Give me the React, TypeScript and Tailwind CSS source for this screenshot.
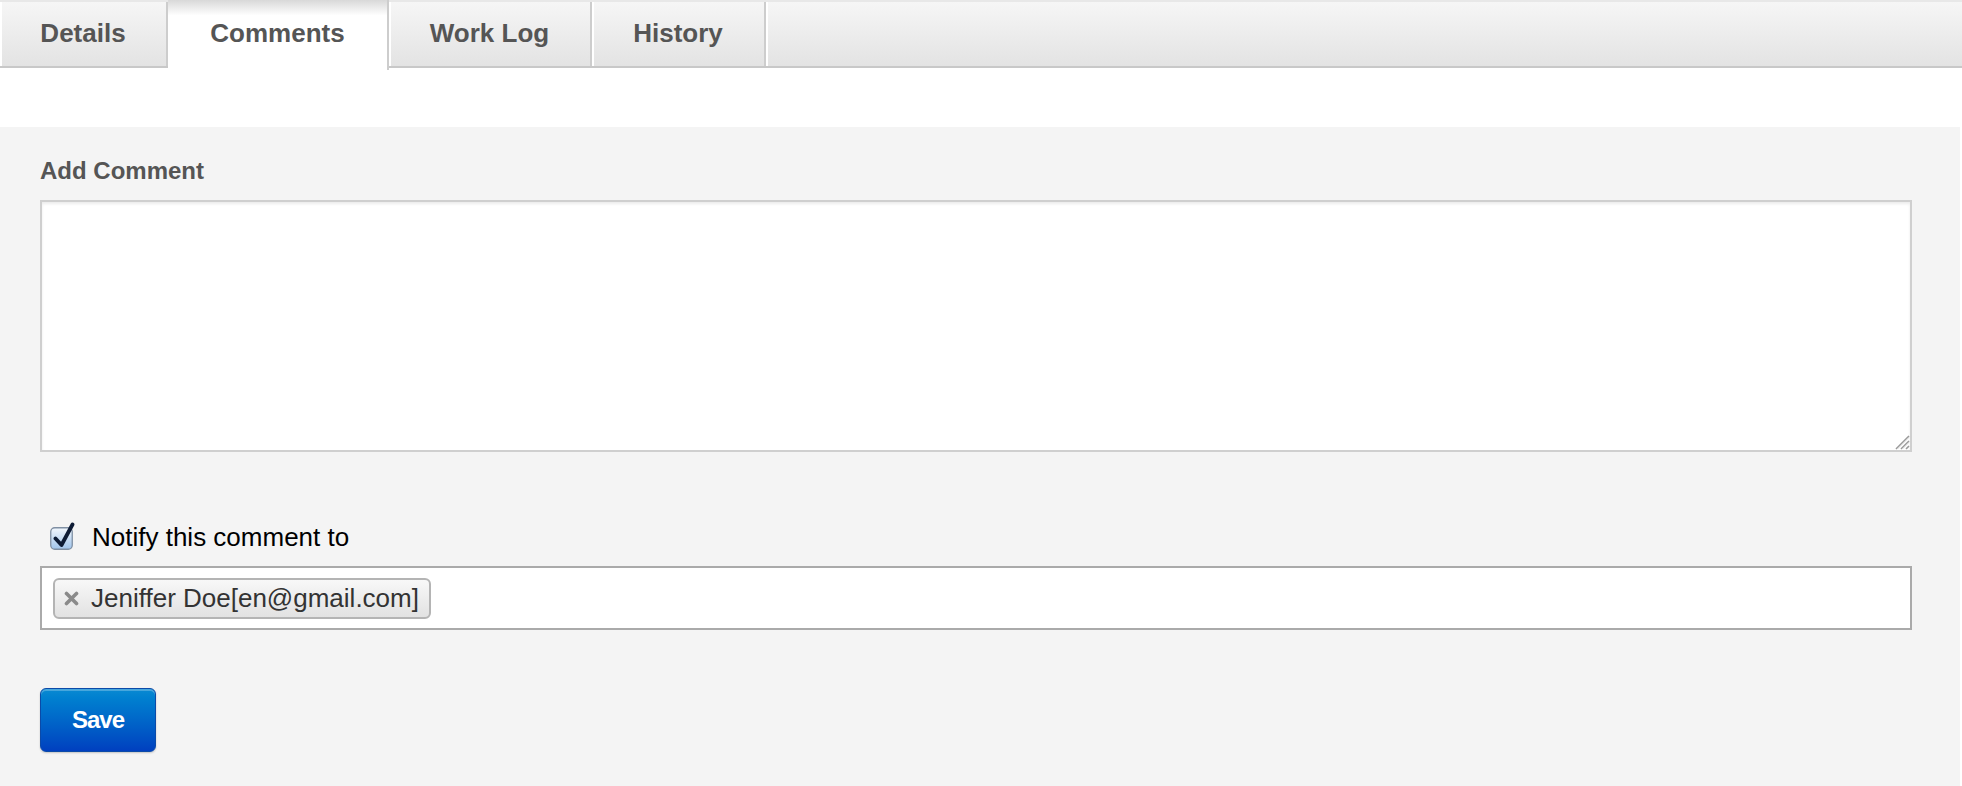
import { useState } from "react";

const tabs = [
  { name: "Details", w: "w-[168px]" },
  { name: "Comments", w: "w-[221px]" },
  { name: "Work Log", w: "w-[203px]" },
  { name: "History", w: "w-[174px]" },
];

const CheckIcon = () => (
  <svg width="26" height="28" viewBox="0 0 26 28" className="absolute left-0 -top-[3px]">
    <defs>
      <linearGradient id="cb" x1="0" y1="0" x2="0" y2="1">
        <stop offset="0" stopColor="#f2f7fd" />
        <stop offset="1" stopColor="#9fc4ec" />
      </linearGradient>
    </defs>
    <rect x="0.75" y="5.75" width="21.5" height="21.5" rx="4" fill="url(#cb)" stroke="#7f8fa3" strokeWidth="1.3" />
    <path d="M5.5 16.5 L11.5 23 L22.5 2.5" fill="none" stroke="#0d1b35" strokeWidth="3.8" strokeLinecap="round" strokeLinejoin="round" />
  </svg>
);

// resize grip drawn over the textarea corner
const Grip = () => (
  <svg width="18" height="18" viewBox="0 0 18 18" className="absolute right-[2px] bottom-[2px] pointer-events-none">
    <path d="M17 4 L4 17 M17 9 L9 17 M17 14 L14 17" stroke="#9a9a9a" strokeWidth="1.6" />
    <path d="M17 5.5 L5.5 17 M17 10.5 L10.5 17" stroke="#e0e0e0" strokeWidth="1" />
  </svg>
);

const RemoveIcon = () => (
  <svg width="15" height="15" viewBox="0 0 15 15" className="mr-[12px]">
    <path d="M2.5 2.5 L12.5 12.5 M12.5 2.5 L2.5 12.5" stroke="#8a8a8a" strokeWidth="3.6" strokeLinecap="round" />
  </svg>
);

export default function App() {
  const [active] = useState("Comments");
  const [checked, setChecked] = useState(true);

  return (
    <div className="w-[1962px] h-[786px] overflow-hidden bg-white font-['Liberation_Sans',Arial,sans-serif]">
      <div className="flex h-[68px] border-t-2 border-t-[#e8e8e8] border-b-2 border-b-[#c8c8c8] bg-gradient-to-b from-[#f6f6f6] to-[#e3e3e3]">
        {tabs.map((t) => {
          const isActive = t.name === active;
          return (
            <div
              key={t.name}
              className={
                isActive
                  ? `${t.w} -mt-[2px] -mb-[2px] h-[70px] flex items-center justify-center border-r-2 border-[#cdcdcd] bg-gradient-to-b from-[#d8d8d8] via-white via-[22%] to-white text-[26px] font-bold text-[#555] pb-[4px]`
                  : `${t.w} flex items-center justify-center border-r-2 border-[#cdcdcd] shadow-[inset_2px_0_0_#fff] text-[26px] font-bold text-[#555] pb-[2px]`
              }
            >
              {t.name}
            </div>
          );
        })}
        <div className="flex-1 shadow-[inset_2px_0_0_#fff]" />
      </div>

      <div className="mt-[59px] mr-[2px] h-[700px] bg-[#f4f4f4] pl-[40px] pr-[48px] pt-[29px]">
        <div className="text-[24px] leading-[30px] font-bold text-[#555]">Add Comment</div>
        <div className="relative mt-[14px]">
          <textarea className="block w-full h-[252px] resize-none bg-white border-2 border-[#cfcfcf] shadow-[inset_0_2px_3px_rgba(0,0,0,0.08)] outline-none" />
          <Grip />
        </div>

        <label className="mt-[70px] flex items-center h-[30px] cursor-pointer select-none">
          <span className="relative ml-[10px] w-[26px] h-[30px] mt-[6px]">
            <input
              type="checkbox"
              className="sr-only"
              checked={checked}
              onChange={() => setChecked(!checked)}
            />
            {checked ? (
              <CheckIcon />
            ) : (
              <span className="absolute left-[1px] top-[3px] w-[22px] h-[22px] rounded-[4px] border border-[#7f8fa3] bg-white" />
            )}
          </span>
          <span className="ml-[16px] text-[26px] text-black">Notify this comment to</span>
        </label>

        <div className="mt-[14px] h-[64px] bg-white border-2 border-[#aaa] flex items-center px-[11px]">
          <span className="flex items-center h-[41px] rounded-[6px] border-2 border-[#b4b4b4] bg-gradient-to-b from-[#f8f8f8] to-[#e2e2e2] pl-[9px] pr-[10px] text-[26px] text-[#333]">
            <RemoveIcon />
            Jeniffer Doe[en@gmail.com]
          </span>
        </div>

        <button className="mt-[58px] w-[116px] h-[64px] rounded-[6px] border border-[#0b4aa8] bg-gradient-to-b from-[#0a8ad2] to-[#003fbf] shadow-[inset_0_2px_0_rgba(255,255,255,0.25),0_1px_2px_rgba(0,0,0,0.2)] text-white text-[24px] font-bold tracking-[-1px]">
          Save
        </button>
      </div>
    </div>
  );
}
